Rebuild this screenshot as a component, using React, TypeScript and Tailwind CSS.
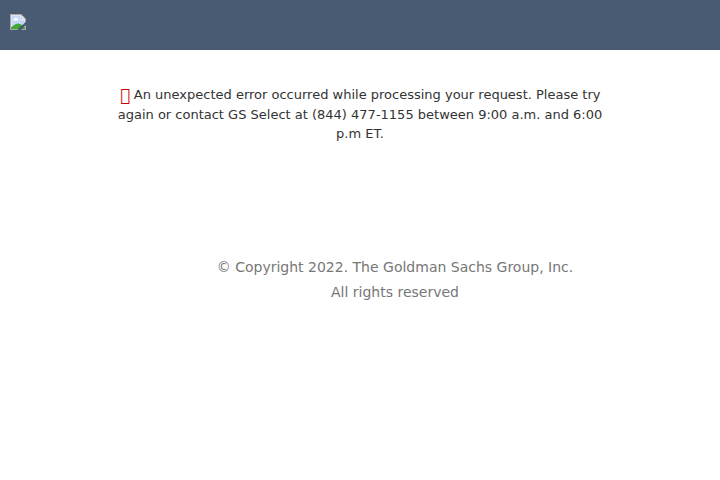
function BrokenImage() {
  return (
    <svg className="block" width="16" height="16" viewBox="0 0 16 16" aria-hidden="true">
      <path d="M0 0h11l5 5v11H0z" fill="#a9a9a9" />
      <path d="M1 1h10l4 4v10H1z" fill="#e8effa" />
      <path d="M1.500 1.500h9v4.500h4v8.500h-13z" fill="#c3d7f7" />
      <path d="M3 6.500Q3 5 4.500 4.800Q5 3 6.500 3.500Q7.500 4 7.500 5Q8.500 5.300 8.500 6.500z" fill="#fff" />
      <path d="M1 15v-1.500c2-1.500 4-4 7-4 3 0 5 2.500 7 4V15z" fill="#43a832" />
      <path d="M11 0v5h5z" fill="#a9a9a9" />
      <path d="M11.500 1.500v3h3z" fill="#fff" />
      <path d="M16 7.500v3.500L11 16H7.500L9.500 13l3-2z" fill="#485b73" />
    </svg>
  );
}

export default function App() {
  return (
    <div className="min-h-[480px] bg-white font-['DejaVu_Sans',sans-serif]">
      <header className="flex h-[50px] items-start bg-[#485b73] pt-[14px] pl-[10px]">
        <BrokenImage />
      </header>
      <main className="pt-[35px]">
        <p className="mx-auto w-[490px] text-center text-[13px] leading-[19.5px] text-[#333]">
          <span className="ml-[0.6px] -mr-[0.6px] inline-block align-[-2px] text-[16.9px] leading-none text-[#c00]" aria-hidden="true">{"\uf06a"}</span>{" "}
          An unexpected error occurred while processing your request. Please try
          <br />
          again or contact GS Select at (844) 477-1155 between 9:00 a.m. and 6:00
          <br />
          p.m ET.
        </p>
      </main>
      <footer className="mt-[111px] pl-[70px] text-center text-sm leading-[25px] text-[#777]">
        © Copyright 2022. The Goldman Sachs Group, Inc.
        <br />
        All rights reserved
      </footer>
    </div>
  );
}
